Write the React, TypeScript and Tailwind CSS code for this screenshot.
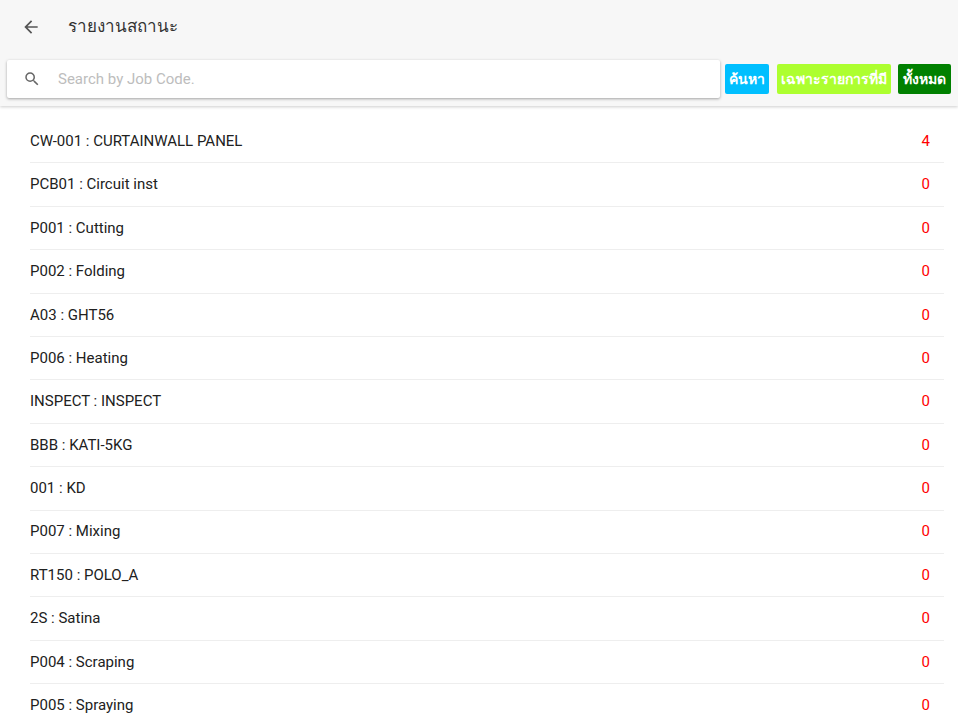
import React from 'react';

const items: { code: string; name: string; count: number }[] = [
  { code: 'CW-001', name: 'CURTAINWALL PANEL', count: 4 },
  { code: 'PCB01', name: 'Circuit inst', count: 0 },
  { code: 'P001', name: 'Cutting', count: 0 },
  { code: 'P002', name: 'Folding', count: 0 },
  { code: 'A03', name: 'GHT56', count: 0 },
  { code: 'P006', name: 'Heating', count: 0 },
  { code: 'INSPECT', name: 'INSPECT', count: 0 },
  { code: 'BBB', name: 'KATI-5KG', count: 0 },
  { code: '001', name: 'KD', count: 0 },
  { code: 'P007', name: 'Mixing', count: 0 },
  { code: 'RT150', name: 'POLO_A', count: 0 },
  { code: '2S', name: 'Satina', count: 0 },
  { code: 'P004', name: 'Scraping', count: 0 },
  { code: 'P005', name: 'Spraying', count: 0 },
];

export default function App() {
  return (
    <div className="h-[721px] overflow-hidden bg-white font-['Roboto','Noto_Sans',sans-serif] text-[#212121]">
      {/* Header */}
      <div className="h-[106px] bg-[#f7f7f7] shadow-[0_1px_3px_rgba(0,0,0,0.2)] relative z-10">
        <div className="flex items-center h-[54px] pl-[21px]">
          <button className="w-[20px] h-[20px] flex items-center justify-center text-[#555]">
            <svg width="20" height="20" viewBox="0 0 24 24" fill="currentColor">
              <path d="M20 11H7.83l5.59-5.59L12 4l-8 8 8 8 1.41-1.41L7.83 13H20v-2z" />
            </svg>
          </button>
          <h1 className="ml-[27px] text-[17px] text-[#333]">รายงานสถานะ</h1>
        </div>
        <div className="flex items-center pl-[7px] pr-[6px] mt-[6px]">
          <div className="flex items-center w-[713px] h-[38px] bg-white rounded-[2px] shadow-[0_1px_3px_rgba(0,0,0,0.35)]">
            <svg className="ml-[16px] text-[#666]" width="18" height="18" viewBox="0 0 24 24" fill="currentColor">
              <path d="M15.5 14h-.79l-.28-.27A6.471 6.471 0 0016 9.5 6.5 6.5 0 109.5 16c1.61 0 3.09-.59 4.23-1.57l.27.28v.79l5 4.99L20.49 19l-4.99-5zm-6 0C7.01 14 5 11.99 5 9.5S7.01 5 9.5 5 14 7.01 14 9.5 11.99 14 9.5 14z" />
            </svg>
            <input
              className="ml-[17px] flex-1 bg-transparent outline-none text-[15px] placeholder:text-[#bdbdbd]"
              placeholder="Search by Job Code."
            />
          </div>
          <button className="ml-[5px] h-[30px] px-[4px] rounded-[2px] bg-[#00bfff] text-white text-[14px] font-bold">ค้นหา</button>
          <button className="ml-[8px] h-[30px] px-[4px] rounded-[2px] bg-[#adff2f] text-white text-[14px] font-bold">เฉพาะรายการที่มี</button>
          <button className="ml-[7px] h-[30px] px-[5px] rounded-[2px] bg-[#008000] text-white text-[14px] font-bold">ทั้งหมด</button>
        </div>
      </div>

      {/* List */}
      <ul className="pt-[14px] pl-[30px] pr-[14px]">
        {items.map((it) => (
          <li
            key={it.code}
            className="flex items-center justify-between h-[43.4px] border-b border-[#eeeeee] text-[15px]"
          >
            <span className="text-[#212121]">
              {it.code} : {it.name}
            </span>
            <span className="pr-[14px] text-[#ff0000]">{it.count}</span>
          </li>
        ))}
      </ul>
    </div>
  );
}
